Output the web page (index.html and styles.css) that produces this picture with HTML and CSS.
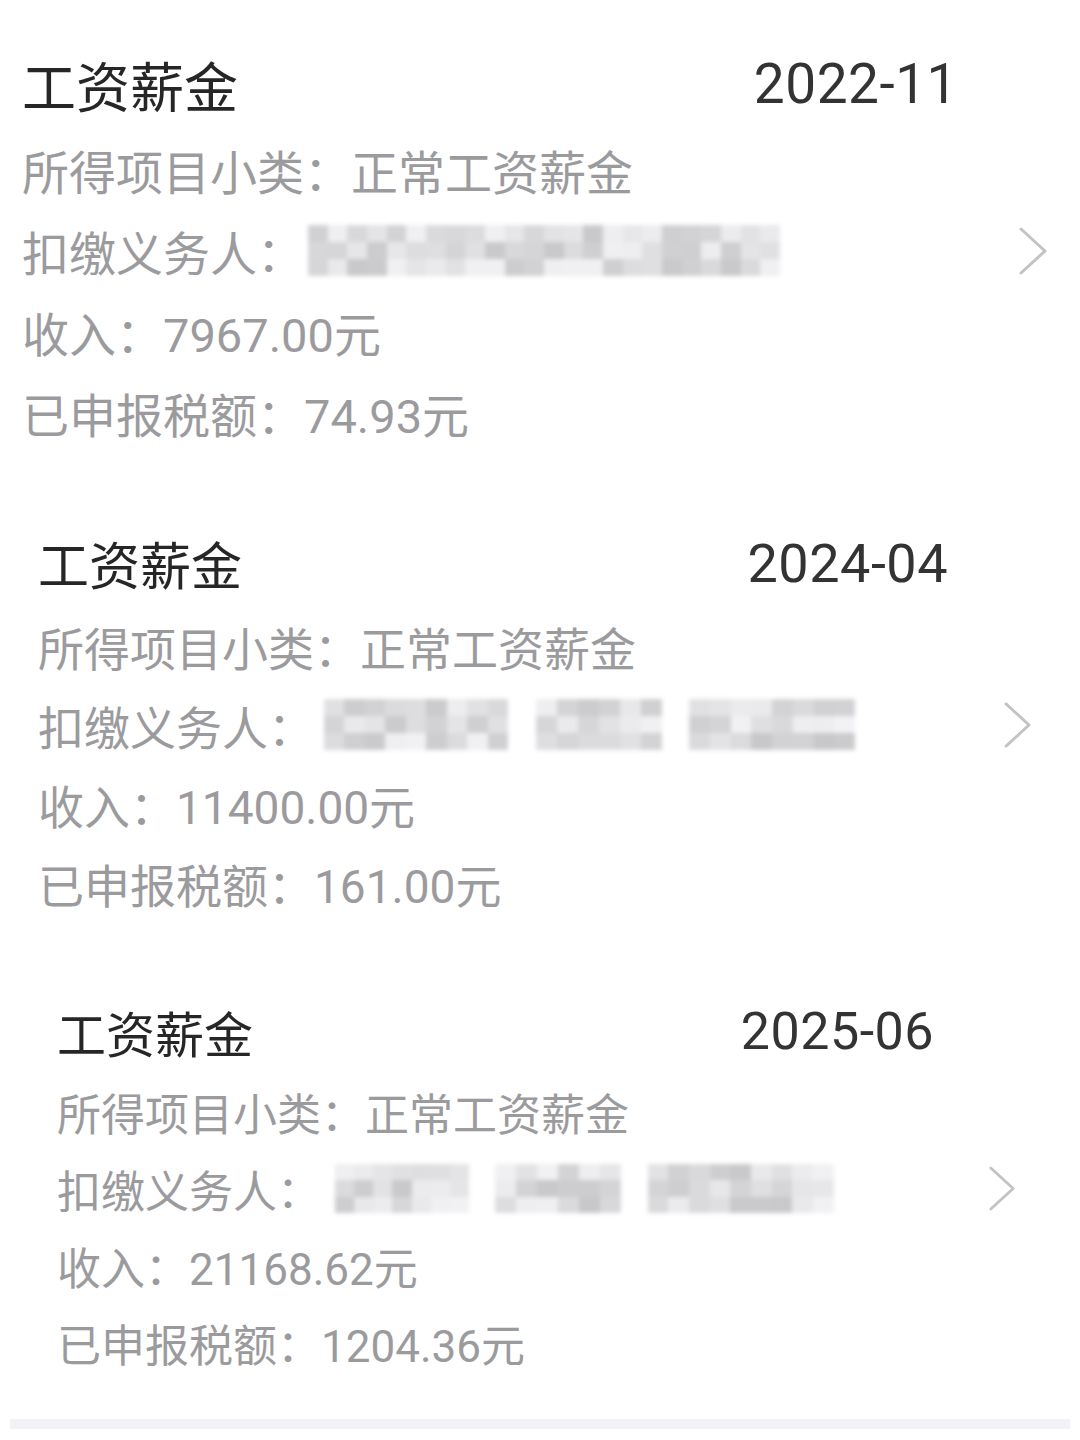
FILE: index.html
```html
<!DOCTYPE html>
<html lang="zh-CN">

<head>
    <meta charset="UTF-8">
    <meta name="viewport" content="width=device-width, initial-scale=1.0">
    <title>收入纳税明细</title>
    <link rel="stylesheet" href="styles.css">
</head>

<body>

    <div class="record-list">

        <!-- 2022-11 -->
        <section class="record record-a">
            <div class="record-head">
                <span class="record-title">工资薪金</span>
                <span class="record-date">2022-11</span>
            </div>
            <div class="record-row">所得项目小类：正常工资薪金</div>
            <div class="record-row payer">
                <span>扣缴义务人：</span>
                <span class="mosaic-wrap">
                    <span class="mosaic" data-cols="24" data-seed="3"></span>
                </span>
                <svg class="chevron" viewBox="0 0 30 50"><polyline points="3,3 27,25 3,47" /></svg>
            </div>
            <div class="record-row">收入：7967.00元</div>
            <div class="record-row">已申报税额：74.93元</div>
        </section>

        <!-- 2024-04 -->
        <section class="record record-b">
            <div class="record-head">
                <span class="record-title">工资薪金</span>
                <span class="record-date">2024-04</span>
            </div>
            <div class="record-row">所得项目小类：正常工资薪金</div>
            <div class="record-row payer">
                <span>扣缴义务人：</span>
                <span class="mosaic-wrap">
                    <span class="mosaic" data-cols="9" data-seed="7"></span>
                    <span class="mosaic" data-cols="6" data-seed="11"></span>
                    <span class="mosaic" data-cols="8" data-seed="19"></span>
                </span>
                <svg class="chevron" viewBox="0 0 30 50"><polyline points="3,3 27,25 3,47" /></svg>
            </div>
            <div class="record-row">收入：11400.00元</div>
            <div class="record-row">已申报税额：161.00元</div>
        </section>

        <!-- 2025-06 -->
        <section class="record record-c">
            <div class="record-head">
                <span class="record-title">工资薪金</span>
                <span class="record-date">2025-06</span>
            </div>
            <div class="record-row">所得项目小类：正常工资薪金</div>
            <div class="record-row payer">
                <span>扣缴义务人：</span>
                <span class="mosaic-wrap">
                    <span class="mosaic" data-cols="7" data-seed="23"></span>
                    <span class="mosaic" data-cols="6" data-seed="29"></span>
                    <span class="mosaic" data-cols="9" data-seed="31"></span>
                </span>
                <svg class="chevron" viewBox="0 0 30 50"><polyline points="3,3 27,25 3,47" /></svg>
            </div>
            <div class="record-row">收入：21168.62元</div>
            <div class="record-row">已申报税额：1204.36元</div>
        </section>

    </div>

    <div class="bottom-bar"></div>

    <script>
        // Fill the blurred payer names with a pixel mosaic
        function rand(seed) {
            let s = seed * 9301 + 49297;
            return function () {
                s = (s * 9301 + 49297) % 233280;
                return s / 233280;
            };
        }

        document.querySelectorAll(".mosaic").forEach(function (box) {
            const cols = parseInt(box.dataset.cols, 10);
            const next = rand(parseInt(box.dataset.seed, 10));
            box.style.gridTemplateColumns = "repeat(" + cols + ", 1fr)";
            for (let i = 0; i < cols * 3; i++) {
                const cell = document.createElement("span");
                const light = Math.round(200 + next() * 42);
                cell.style.background = "rgb(" + light + "," + light + "," + (light + 3) + ")";
                box.appendChild(cell);
            }
        });
    </script>

</body>

</html>
```

FILE: styles.css
```css
/* Reset */
* {
    margin: 0;
    padding: 0;
    box-sizing: border-box;
}

body {
    font-family: Roboto, "Noto Sans CJK SC", sans-serif;
    background-color: #fff;
    color: #333;
    width: 1080px;
    height: 1440px;
    overflow: hidden;
}

/* List of income records */
.record-list {
    padding-top: 49px;
    display: flex;
    flex-direction: column;
    gap: 76px;
}

.record-head {
    display: flex;
    justify-content: space-between;
    align-items: center;
}

.record-title {
    font-weight: 400;
    color: #262626;
}

.record-date {
    color: #333;
    letter-spacing: 0.5px;
}

.record-row {
    color: #9b9b9e;
    display: flex;
    align-items: center;
    white-space: nowrap;
}

/* Blurred payer name */
.mosaic-wrap {
    display: flex;
    gap: 0.6em;
    margin-left: 4px;
    filter: blur(2px);
}

.mosaic {
    display: grid;
    grid-template-rows: repeat(3, 1fr);
    height: 1.1em;
}

.payer .chevron {
    margin-left: auto;
    fill: none;
    stroke: #c3c3c6;
    stroke-width: 3;
    stroke-linecap: round;
    stroke-linejoin: round;
}

/* Each record is a slightly different crop size */
.record-a {
    padding: 0 32px 0 22px;
}

.record-a .record-head {
    height: 70px;
    padding-right: 90px;
}

.record-a .record-title {
    font-size: 54px;
}

.record-a .record-date {
    font-size: 55px;
}

.record-a .record-head + .record-row {
    margin-top: 10px;
}

.record-a .record-row {
    font-size: 47px;
    height: 81px;
}

.record-a .mosaic {
    width: 472px;
}

.record-a .chevron {
    width: 30px;
    height: 50px;
}

.record-b {
    padding: 0 48px 0 38px;
}

.record-b .record-head {
    height: 68px;
    padding-right: 84px;
}

.record-b .record-title {
    font-size: 51px;
}

.record-b .record-date {
    font-size: 54px;
}

.record-b .record-head + .record-row {
    margin-top: 9px;
}

.record-b .record-row {
    font-size: 46px;
    height: 79px;
}

.record-b .mosaic-wrap {
    margin-left: 10px;
}

.record-b .mosaic:nth-child(1) { width: 184px; }
.record-b .mosaic:nth-child(2) { width: 126px; }
.record-b .mosaic:nth-child(3) { width: 166px; }

.record-b .chevron {
    width: 29px;
    height: 48px;
}

.record-c {
    padding: 0 64px 0 57px;
}

.record-c .record-head {
    height: 66px;
    padding-right: 82px;
}

.record-c .record-title {
    font-size: 49px;
}

.record-c .record-date {
    font-size: 52px;
}

.record-c .record-head + .record-row {
    margin-top: 9px;
}

.record-c .record-row {
    font-size: 44px;
    height: 77px;
}

.record-c .mosaic-wrap {
    margin-left: 14px;
}

.record-c .mosaic:nth-child(1) { width: 134px; }
.record-c .mosaic:nth-child(2) { width: 126px; }
.record-c .mosaic:nth-child(3) { width: 186px; }

.record-c .chevron {
    width: 28px;
    height: 47px;
}

/* Strip at the bottom of the screen */
.bottom-bar {
    margin: 38px 10px 0;
    height: 10px;
    background-color: #f3f3f7;
}
```
